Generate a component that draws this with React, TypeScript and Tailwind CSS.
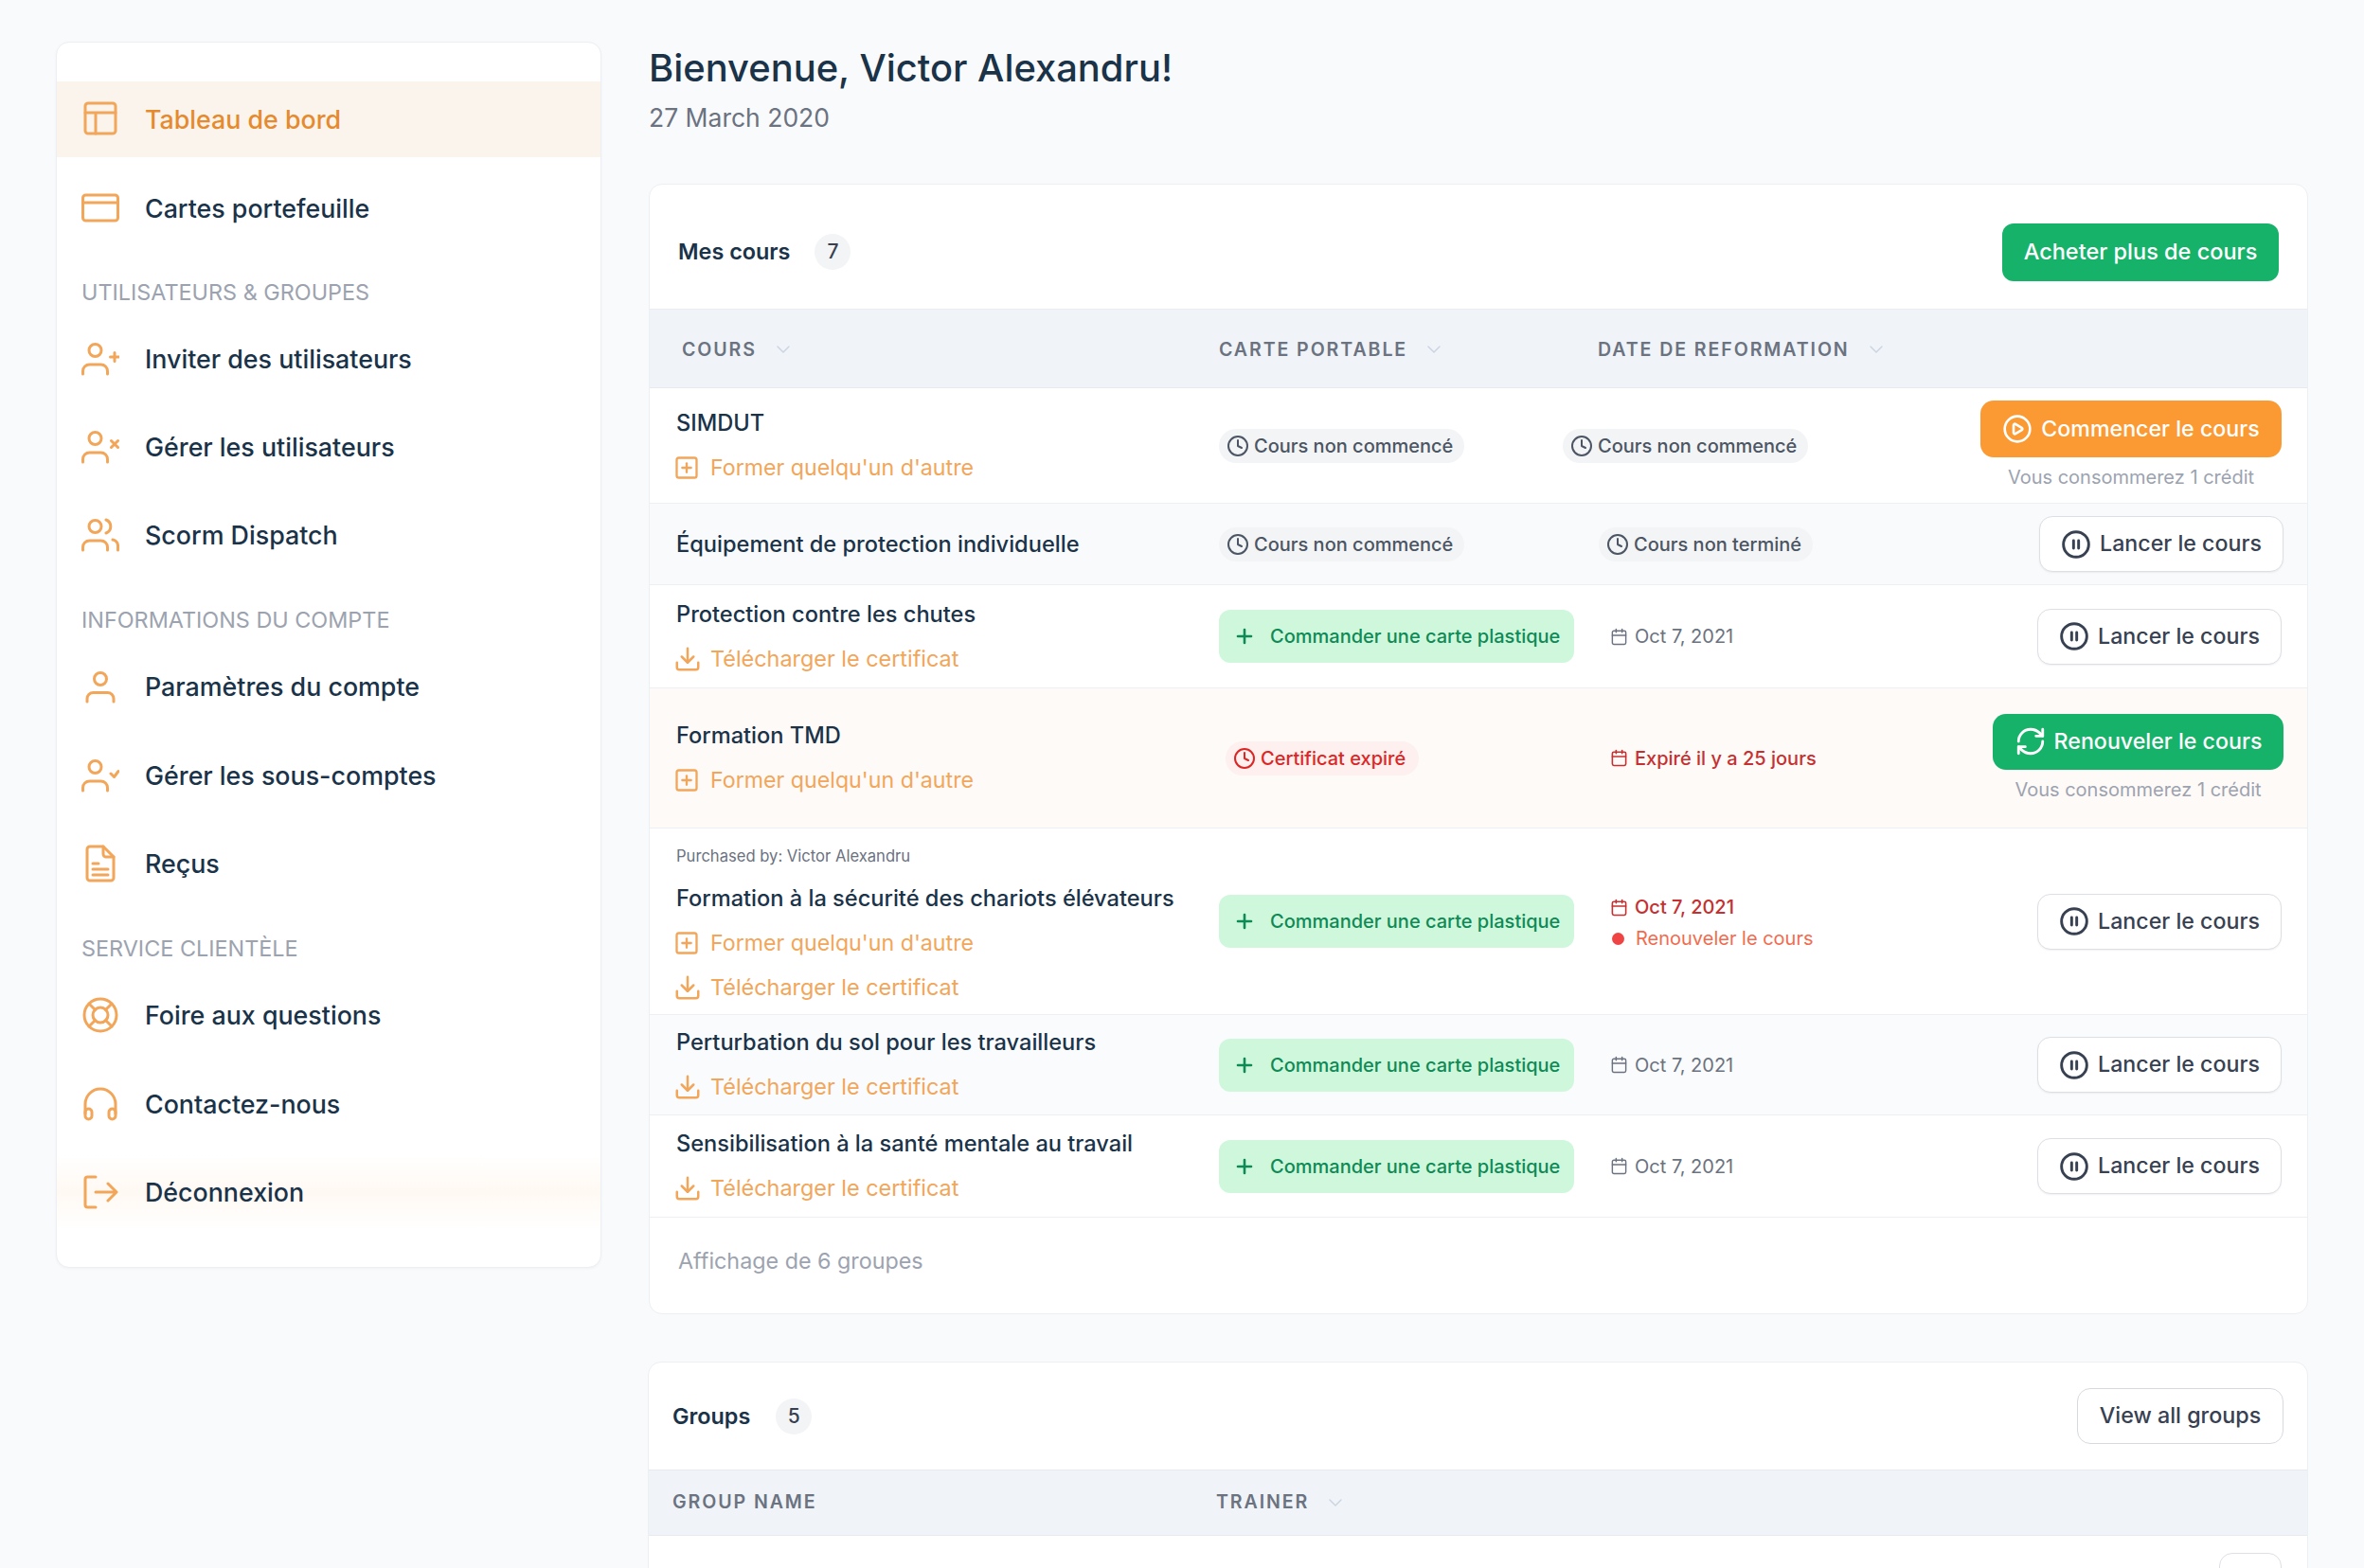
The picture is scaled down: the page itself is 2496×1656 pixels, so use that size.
import React from 'react';
import {
    ChevronDown,
    CirclePause,
    CirclePlay,
    Clock,
    Calendar,
    Download,
    Plus,
    RefreshCw,
    SquarePlus
} from 'lucide-react';

const Glyph: React.FC<{ children: React.ReactNode }> = ({ children }) => (
    <svg width="40" height="40" viewBox="0 0 40 40" fill="none" stroke="currentColor" strokeWidth="3" strokeLinecap="round" strokeLinejoin="round" className="shrink-0 text-[#f2a65a]">
        {children}
    </svg>
);

const Person = () => (
    <>
        <circle cx="14.5" cy="11" r="6.5" />
        <path d="M1.5 36v-3a7 7 0 0 1 7-7h12a7 7 0 0 1 7 7v3" />
    </>
);

const icons: Record<string, React.ReactNode> = {
    dashboard: <><rect x="4" y="3" width="32" height="32" rx="3" /><path d="M4 13h32M15 13v22" /></>,
    card: <><rect x="1.5" y="6" width="37" height="27" rx="3" /><path d="M1.5 14h37" /></>,
    invite: <><Person /><path d="M35 13.5v9M30.5 18h9" /></>,
    manage: <><Person /><path d="M31.5 13.5l7 7M38.5 13.5l-7 7" /></>,
    group: <><Person /><path d="M26 4a7.5 7.5 0 0 1 0 14M33 25a6.5 6.5 0 0 1 5.5 7v4" /></>,
    account: <><circle cx="20" cy="12" r="6.5" /><path d="M6 36v-3a6.5 6.5 0 0 1 6.5-6.5h15A6.5 6.5 0 0 1 34 33v3" /></>,
    sub: <><Person /><path d="M31 18l3.5 3.5 4.5-6" /></>,
    receipt: <><path d="M6 5a3 3 0 0 1 3-3h14l11 11v22a3 3 0 0 1-3 3H9a3 3 0 0 1-3-3z" /><path d="M23 2v8a3 3 0 0 0 3 3h8M12 20h6M12 26h16M12 32h16" /></>,
    faq: <><circle cx="20" cy="20" r="17" /><circle cx="20" cy="20" r="8" /><path d="M8 8l6.5 6.5M32 8l-6.5 6.5M8 32l6.5-6.5M32 32l-6.5-6.5" /></>,
    contact: <><path d="M4 30V20a16 16 0 0 1 32 0v10" /><rect x="4" y="25" width="7" height="11" rx="3.5" /><rect x="29" y="25" width="7" height="11" rx="3.5" /></>,
    logout: <><path d="M15 4H6.5A2.5 2.5 0 0 0 4 6.5v27A2.5 2.5 0 0 0 6.5 36H15M15 20h22M28 11l9 9-9 9" /></>
};

const NavItem: React.FC<{ icon: string; label: string; className?: string; textClass?: string }> = ({ icon, label, className = '', textClass = 'text-[#1a3349]' }) => (
    <div className={`flex h-[80px] items-center gap-[27px] pl-[26px] ${className}`}>
        <Glyph>{icons[icon]}</Glyph>
        <span className={`text-[26.8px] font-medium ${textClass}`}>{label}</span>
    </div>
);

const NavHeading: React.FC<{ label: string; className: string }> = ({ label, className }) => (
    <div className={`flex h-[30px] items-center pl-[26px] text-[23.4px] text-[#9ca3af] ${className}`}>{label}</div>
);

const Sidebar = () => (
    <aside className="mt-[44px] flex h-[1295px] w-[576px] shrink-0 flex-col rounded-[14px] border border-[#eceff3] bg-white pt-[41px] shadow-[0_1px_3px_rgba(15,23,42,0.04)]">
        <NavItem icon="dashboard" label="Tableau de bord" className="bg-[#faf4ec]" textClass="text-[#e58a2e]" />
        <NavItem icon="card" label="Cartes portefeuille" className="mt-[14px]" />
        <NavHeading label="UTILISATEURS & GROUPES" className="mt-[34px]" />
        <NavItem icon="invite" label="Inviter des utilisateurs" className="mt-[15px]" />
        <NavItem icon="manage" label="Gérer les utilisateurs" className="mt-[13px]" />
        <NavItem icon="group" label="Scorm Dispatch" className="mt-[13px]" />
        <NavHeading label="INFORMATIONS DU COMPTE" className="mt-[35px]" />
        <NavItem icon="account" label="Paramètres du compte" className="mt-[15px]" />
        <NavItem icon="sub" label="Gérer les sous-comptes" className="mt-[14px]" />
        <NavItem icon="receipt" label="Reçus" className="mt-[13px]" />
        <NavHeading label="SERVICE CLIENTÈLE" className="mt-[35px]" />
        <NavItem icon="faq" label="Foire aux questions" className="mt-[15px]" />
        <NavItem icon="contact" label="Contactez-nous" className="mt-[14px]" />
        <NavItem icon="logout" label="Déconnexion" className="mt-[13px] bg-linear-to-b from-white via-[#fff9f3] to-white" />
    </aside>
);

const Former = () => (
    <div className="mt-[15px] -ml-[3px] flex h-[32px] items-center gap-[11px] text-[23.2px] text-[#f2a65a]">
        <SquarePlus size={28} strokeWidth={2} />
        <span>Former quelqu'un d'autre</span>
    </div>
);

const Certificat = () => (
    <div className="mt-[15px] -ml-[3px] flex h-[32px] items-center gap-[9px] text-[23.4px] text-[#f2a65a]">
        <Download size={30} strokeWidth={2} />
        <span>Télécharger le certificat</span>
    </div>
);

const Title: React.FC<{ children: React.ReactNode }> = ({ children }) => (
    <div className="h-[32px] text-[23.6px] leading-[32px] font-medium text-[#1a3349]">{children}</div>
);

const Pill: React.FC<{ label: string; className?: string }> = ({ label, className = '' }) => (
    <div className={`flex h-[36px] w-fit items-center gap-[5px] rounded-full bg-[#f3f4f6] pr-[12px] pl-[8px] text-[20px] font-medium text-[#4b5563] ${className}`}>
        <Clock size={24} strokeWidth={2} />
        <span>{label}</span>
    </div>
);

const OrderCard = () => (
    <div className="flex h-[56px] w-[375px] items-center gap-[15px] rounded-[12px] bg-[#cff7dc] pl-[15px] text-[20px] font-medium whitespace-nowrap text-[#0d8a55]">
        <Plus size={24} strokeWidth={2.6} />
        <span>Commander une carte plastique</span>
    </div>
);

const DateCell: React.FC<{ date?: string }> = ({ date = 'Oct 7, 2021' }) => (
    <div className="ml-[50px] flex items-center gap-[7px] text-[20px] text-[#6b7280]">
        <Calendar size={19} strokeWidth={1.8} />
        <span>{date}</span>
    </div>
);

const Launch = () => (
    <button className="flex h-[59px] w-[258px] items-center justify-center gap-[9px] rounded-[14px] border border-[#dcdfe4] bg-white text-[23.2px] font-medium text-[#374151] shadow-[0_1px_2px_rgba(15,23,42,0.06)]">
        <CirclePause size={32} strokeWidth={2.2} />
        <span>Lancer le cours</span>
    </button>
);

const Credit = () => <div className="mt-[9px] h-[24px] text-[20px] leading-[24px] text-[#9ca3af]">Vous consommerez 1 crédit</div>;

const Row: React.FC<{ className: string; left: React.ReactNode; card: React.ReactNode; date: React.ReactNode; action: React.ReactNode }> = ({ className, left, card, date, action }) => (
    <div className={`flex items-center border-b border-[#eceff3] ${className}`}>
        <div className="flex w-[601px] shrink-0 flex-col pl-[28px]">{left}</div>
        <div className="w-[363px] shrink-0">{card}</div>
        <div className="w-[300px] shrink-0">{date}</div>
        <div className="flex flex-1 justify-end pr-[27px]">{action}</div>
    </div>
);

const Sort: React.FC<{ label: string; chevron?: boolean; className?: string }> = ({ label, chevron = true, className = '' }) => (
    <div className={`flex items-center gap-[16px] text-[19.6px] font-semibold tracking-[1.9px] text-[#6b7280] ${className}`}>
        <span>{label}</span>
        {chevron && <ChevronDown size={24} strokeWidth={1.5} className="text-[#cbd5e1]" />}
    </div>
);

const Courses = () => (
    <section className="mt-[52px] h-[1194px] overflow-hidden rounded-[14px] border border-[#eceff3] bg-white">
        <div className="flex h-[132px] items-center justify-between border-b border-[#e9ecf0] pt-[11px] pr-[30px] pl-[30px]">
            <div className="flex items-center gap-[26px]">
                <span className="text-[23.4px] font-semibold text-[#1a3349]">Mes cours</span>
                <span className="flex h-[38px] w-[38px] items-center justify-center rounded-full bg-[#f3f4f6] text-[21px] font-medium text-[#374151]">7</span>
            </div>
            <button className="h-[61px] w-[292px] rounded-[12px] bg-[#17b26a] text-[23.5px] font-medium text-white">Acheter plus de cours</button>
        </div>
        <div className="flex h-[83px] items-center border-b border-[#e6e9ee] bg-[#f0f4f8] pt-[3px]">
            <Sort label="COURS" className="w-[601px] pl-[34px]" />
            <Sort label="CARTE PORTABLE" className="w-[400px]" />
            <Sort label="DATE DE REFORMATION" />
        </div>

        <Row
            className="h-[122px]"
            left={<><Title>SIMDUT</Title><Former /></>}
            card={<Pill label="Cours non commencé" />}
            date={<Pill label="Cours non commencé" />}
            action={
                <div className="-mt-[2px] flex flex-col items-center">
                    <button className="flex h-[60px] w-[318px] items-center justify-center gap-[9px] rounded-[14px] bg-[#fb9a33] text-[23.2px] font-medium text-white">
                        <CirclePlay size={32} strokeWidth={2} />
                        <span>Commencer le cours</span>
                    </button>
                    <Credit />
                </div>
            }
        />
        <Row
            className="h-[86px] bg-[#f9fafb]"
            left={<Title>Équipement de protection individuelle</Title>}
            card={<Pill label="Cours non commencé" />}
            date={<Pill label="Cours non terminé" className="ml-[38px]" />}
            action={<div className="mr-[-2px]"><Launch /></div>}
        />
        <Row
            className="h-[109px]"
            left={<><Title>Protection contre les chutes</Title><Certificat /></>}
            card={<OrderCard />}
            date={<DateCell />}
            action={<Launch />}
        />
        <Row
            className="h-[148px] bg-[#fefaf8]"
            left={<><Title>Formation TMD</Title><Former /></>}
            card={
                <div className="ml-[7px] flex h-[36px] w-fit items-center gap-[5px] rounded-full bg-[#fdf0ee] pr-[14px] pl-[8px] text-[20px] font-medium text-[#dc2626]">
                    <Clock size={24} strokeWidth={2} />
                    <span>Certificat expiré</span>
                </div>
            }
            date={
                <div className="ml-[50px] flex items-center gap-[7px] text-[20px] font-medium text-[#c53030]">
                    <Calendar size={19} strokeWidth={2} />
                    <span>Expiré il y a 25 jours</span>
                </div>
            }
            action={
                <div className="mr-[-2px] -mt-[2px] flex flex-col items-center">
                    <button className="flex h-[59px] w-[307px] items-center justify-center gap-[8px] rounded-[14px] bg-[#17b26a] text-[23.2px] font-medium text-white">
                        <RefreshCw size={34} strokeWidth={2} />
                        <span>Renouveler le cours</span>
                    </button>
                    <Credit />
                </div>
            }
        />
        <Row
            className="h-[197px]"
            left={
                <>
                    <div className="mt-[5px] mb-[17px] h-[24px] text-[16.6px] leading-[24px] text-[#6b7280]">Purchased by: Victor Alexandru</div>
                    <Title>Formation à la sécurité des chariots élévateurs</Title>
                    <Former />
                    <Certificat />
                </>
            }
            card={<OrderCard />}
            date={
                <div className="ml-[50px] flex flex-col pt-[3px]">
                    <div className="flex items-center gap-[7px] text-[20px] font-medium text-[#c53030]">
                        <Calendar size={19} strokeWidth={2} />
                        <span>Oct 7, 2021</span>
                    </div>
                    <div className="mt-[3px] flex items-center gap-[12px] pl-[2px] text-[20px] text-[#f26b4f]">
                        <span className="h-[13px] w-[13px] rounded-full bg-[#ef4444]" />
                        <span>Renouveler le cours</span>
                    </div>
                </div>
            }
            action={<Launch />}
        />
        <Row
            className="h-[106px] bg-[#fafbfc]"
            left={<><Title>Perturbation du sol pour les travailleurs</Title><Certificat /></>}
            card={<OrderCard />}
            date={<DateCell />}
            action={<Launch />}
        />
        <Row
            className="h-[108px]"
            left={<><Title>Sensibilisation à la santé mentale au travail</Title><Certificat /></>}
            card={<OrderCard />}
            date={<DateCell />}
            action={<Launch />}
        />
        <div className="flex h-[92px] items-center pl-[30px] text-[23.3px] text-[#9ca3af]">Affichage de 6 groupes</div>
    </section>
);

const Groups = () => (
    <section className="mt-[50px] -ml-[1px] overflow-hidden rounded-t-[14px] border border-[#eceff3] bg-white">
        <div className="flex h-[113px] items-center justify-between pr-[25px] pl-[25px]">
            <div className="flex items-center gap-[27px]">
                <span className="text-[23.4px] font-semibold text-[#1a3349]">Groups</span>
                <span className="flex h-[38px] w-[38px] items-center justify-center rounded-full bg-[#f3f4f6] text-[21px] font-medium text-[#374151]">5</span>
            </div>
            <button className="h-[59px] w-[218px] rounded-[14px] border border-[#d6d9de] bg-white text-[23.3px] font-medium text-[#374151]">View all groups</button>
        </div>
        <div className="flex h-[70px] items-center border-y border-[#e6e9ee] bg-[#f0f4f8]">
            <Sort label="GROUP NAME" chevron={false} className="w-[599px] pl-[25px]" />
            <Sort label="TRAINER" />
        </div>
        <div className="flex h-[120px] items-start justify-end pt-[18px] pr-[27px]">
            <div className="h-[59px] w-[66px] rounded-[14px] border border-[#dcdfe4] bg-white" />
        </div>
    </section>
);

const App: React.FC = () => (
    <div className="flex h-[1656px] w-[2496px] overflow-hidden bg-[#f9fafb] pl-[59px] font-['Inter',sans-serif]">
        <Sidebar />
        <main className="ml-[50px] w-[1752px] pt-[46px]">
            <h1 className="text-[39.9px] leading-[52px] font-medium text-[#1a3349]">Bienvenue, Victor Alexandru!</h1>
            <div className="mt-[8px] text-[26.5px] leading-[36px] text-[#6b7280]">27 March 2020</div>
            <Courses />
            <Groups />
        </main>
    </div>
);

export default App;
